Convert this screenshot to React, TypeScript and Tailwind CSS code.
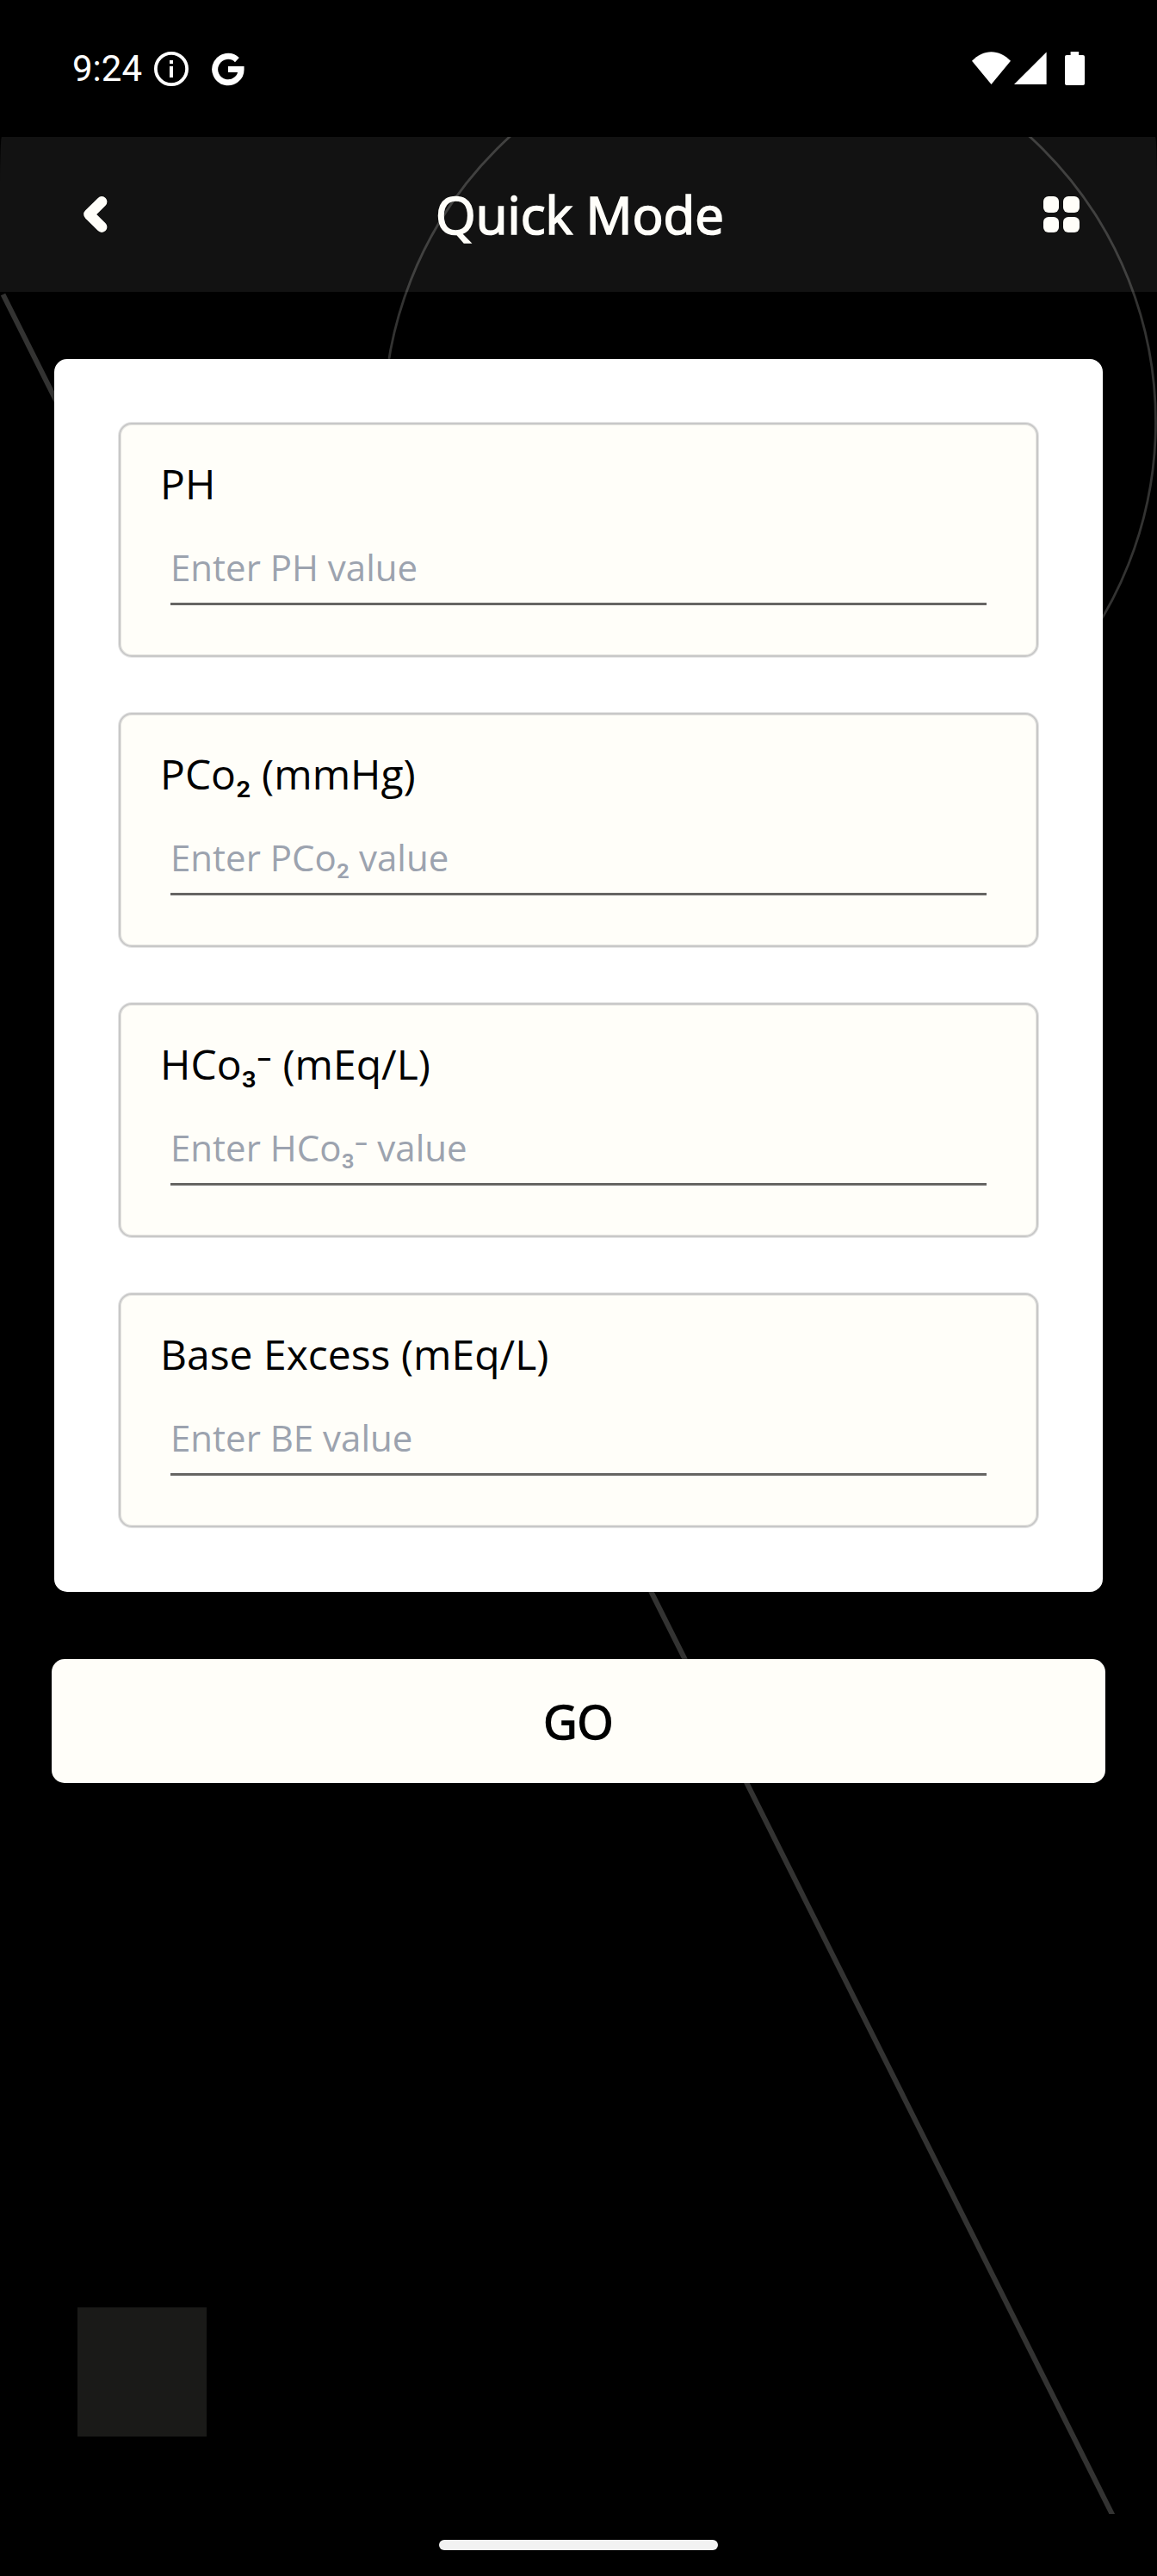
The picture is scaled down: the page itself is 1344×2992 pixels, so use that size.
import React from "react";

type Formula = { base: string; script?: string; rest?: string };
type Field = { label: Formula; placeholder: Formula };

const fields: Field[] = [
  { label: { base: "PH" }, placeholder: { base: "Enter PH value" } },
  {
    label: { base: "PCo", script: "₂", rest: " (mmHg)" },
    placeholder: { base: "Enter PCo", script: "₂", rest: " value" },
  },
  {
    label: { base: "HCo", script: "₃⁻", rest: " (mEq/L)" },
    placeholder: { base: "Enter HCo", script: "₃⁻", rest: " value" },
  },
  { label: { base: "Base Excess (mEq/L)" }, placeholder: { base: "Enter BE value" } },
];

function StatusBar() {
  return (
    <div className="flex h-[159px] items-center justify-between px-[84px]">
      <div className="flex items-center">
        <span className="w-[95px] font-['Roboto'] text-[42px] leading-[49px] text-white">9:24</span>
        <svg className="h-10 w-10" viewBox="0 0 40 40" fill="none">
          <circle cx="20" cy="20" r="18.1" stroke="white" strokeWidth="3.8" />
          <path d="M18 10h4v4h-4zM18 17h4v13h-4z" fill="white" />
        </svg>
        <svg className="ml-[26px] h-10 w-10" viewBox="0 0 40 40" fill="none">
          <path d="M30.4 9.6A15.2 15.2 0 1 0 35.1 20.4H20" stroke="white" strokeWidth="7" />
        </svg>
      </div>
      <svg className="h-10 w-[132px]" viewBox="0 0 132 40" fill="white">
        <path d="M1 10.8C14-3.4 33-3.4 46 10.8L23.5 38Z" />
        <path d="M50 38H87.6V.4Z" />
        <path d="M115.6 0h9.6v4H130a2 2 0 0 1 2 2v31a2 2 0 0 1-2 2h-19a2 2 0 0 1-2-2V6a2 2 0 0 1 2-2h4.6Z" />
      </svg>
    </div>
  );
}

function Header() {
  return (
    <header className="flex h-[180px] items-center justify-between rounded-t-[2px_60px] bg-white/7 pr-[90px] pl-[97px]">
      <svg className="h-[42px] w-[42px]" viewBox="0 0 42 42" fill="none">
        <path d="M21.2 6.3L6.4 21L21.2 35.7" stroke="#fffef9" strokeWidth="12.4" strokeLinecap="round" strokeLinejoin="round" />
      </svg>
      <h1 className="mr-1 pb-px text-[60px] leading-[84px] font-normal text-[#fffef9] [-webkit-text-stroke:1.7px_#fffef9]">Quick Mode</h1>
      <div className="grid h-[42px] w-[42px] grid-cols-2 gap-[5px]">
        {[0, 1, 2, 3].map((i) => (
          <span key={i} className="rounded-[6px] bg-[#fffef9]" />
        ))}
      </div>
    </header>
  );
}

function FormulaText({ base, script, rest }: Formula) {
  return (
    <span>
      {base}
      {script && <span className="font-['Roboto']">{script}</span>}
      {rest}
    </span>
  );
}

function FieldBox({ label, placeholder }: Field) {
  return (
    <div className="h-[272px] rounded-[15px] border-2 border-[#c8c8c8] bg-[#fffef9] px-[46px] pt-[36px] shadow-[0_0_0_1px_#e6e6e6,inset_0_0_0_1px_#e6e5e1]">
      <div className="h-[66px] text-[48px] leading-[66px] whitespace-nowrap text-black">
        <FormulaText {...label} />
      </div>
      <div className="mx-3 mt-[31px] h-[77px] border-b-3 border-[#666563] pt-1 text-[42px] leading-[58px] whitespace-nowrap text-[#9ca3af]">
        <FormulaText {...placeholder} />
      </div>
    </div>
  );
}

export default function App() {
  return (
    <div className="relative h-[2992px] w-[1344px] overflow-hidden bg-black font-['Open_Sans',sans-serif]">
      <svg className="absolute inset-x-0 top-[159px] h-[2761px] w-[1344px]" viewBox="0 159 1344 2761" fill="none" stroke="#333332">
        <circle cx="894.2" cy="490" r="448.3" strokeWidth="2.8" />
        <path d="M3.5 342L1301.7 2940" strokeWidth="6" />
      </svg>
      <div className="relative flex h-full flex-col">
        <StatusBar />
        <Header />
        <main className="flex flex-col px-[60px] pt-[78px]">
          <section className="mx-[3px] flex h-[1432px] flex-col gap-[65px] rounded-[15px] bg-white px-[75px] pt-[74px]">
            {fields.map((f) => (
              <FieldBox key={f.label.base} {...f} />
            ))}
          </section>
          <button className="mt-[78px] flex h-[144px] items-center justify-center rounded-[15px] bg-[#fffef9] text-[54px] leading-[74px] font-normal text-black [-webkit-text-stroke:1.6px_#000]">
            GO
          </button>
        </main>
        <div className="mt-[609px] ml-[90px] h-[150px] w-[150px] bg-[#1a1a18]" />
        <div className="mt-[120px] h-3 w-[324px] self-center rounded-full bg-[#f2f2f2]" />
      </div>
    </div>
  );
}
